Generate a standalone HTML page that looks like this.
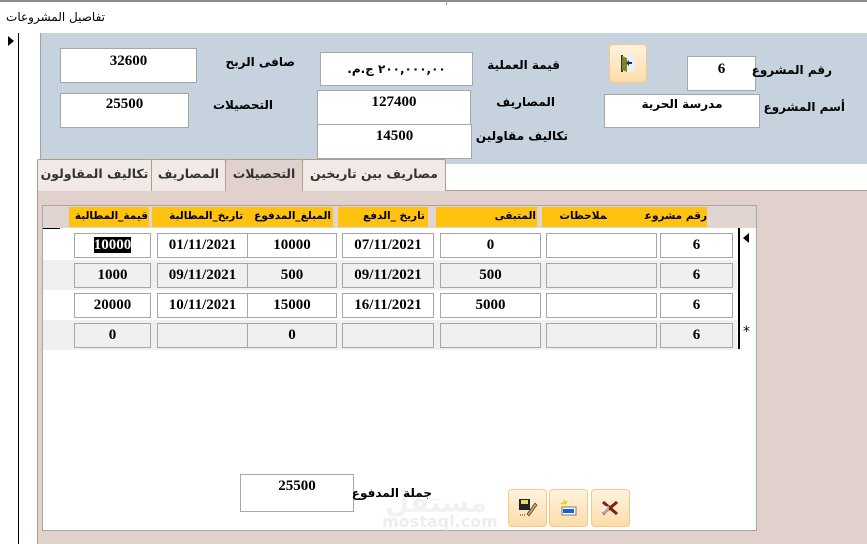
<!DOCTYPE html>
<html><head><meta charset="utf-8"><style>
*{margin:0;padding:0;box-sizing:border-box}
body{width:867px;height:544px;position:relative;background:#fff;overflow:hidden;font-family:"Liberation Sans","DejaVu Sans",sans-serif}
.a{position:absolute}
.box{position:absolute;background:#fff;border:1px solid #a6a6a6;font:bold 15px "Liberation Serif",serif;text-align:center;color:#000}
.lb{position:absolute;font:bold 12px "DejaVu Sans",sans-serif;direction:rtl;white-space:nowrap;color:#000;text-align:right}
.tab{position:absolute;top:159px;height:32px;border:1px solid #b59a8c;border-bottom:none;background:#f1e9e6;font:bold 12.5px "DejaVu Sans",sans-serif;direction:rtl;text-align:center;line-height:28px;color:#333;border-radius:2px 2px 0 0;white-space:nowrap;overflow:hidden}
.or{position:absolute;top:207px;height:20px;background:#ffc20e;font:bold 10.5px "DejaVu Sans",sans-serif;direction:rtl;line-height:18px;white-space:nowrap;overflow:hidden}
.c{position:absolute;height:25px;border:1px solid #a6a6a6;font:bold 15px "Liberation Serif",serif;text-align:center;line-height:23px}
.btn{position:absolute;top:489px;width:39px;height:38px;border:1px solid #f5c98a;border-radius:4px;background:linear-gradient(#fff3df,#fddcaa)}
</style></head><body>
<div class="a" style="left:0;top:0;width:867px;height:2px;background:#8a8a8a"></div>
<div class="a" style="left:446px;top:0;width:1px;height:5px;background:#999"></div>
<div class="lb" style="right:762px;top:10px;font-weight:normal;font-size:12px">تفاصيل المشروعات</div>
<div class="a" style="left:18px;top:33px;width:1px;height:511px;background:#000"></div>
<div class="a" style="left:8px;top:36px;width:0;height:0;border-left:6px solid #000;border-top:5px solid transparent;border-bottom:5px solid transparent"></div>
<div class="a" style="left:40px;top:33px;width:827px;height:131px;background:#c6d2de;border-left:1px solid #9aa"></div>
<div class="a" style="left:445px;top:164px;width:422px;height:26px;background:#fff"></div>

<div class="box" style="left:60px;top:48px;width:137px;height:35px;line-height:24px">32600</div>
<div class="box" style="left:60px;top:93px;width:129px;height:35px;line-height:20px">25500</div>
<div class="box" style="left:320px;top:52px;width:153px;height:34px;line-height:32px;font-size:12px;font-family:'DejaVu Sans',sans-serif;direction:rtl">٢٠٠,٠٠٠,٠٠ ج.م.</div>
<div class="box" style="left:317px;top:90px;width:154px;height:35px;line-height:22px">127400</div>
<div class="box" style="left:317px;top:124px;width:155px;height:35px;line-height:22px">14500</div>
<div class="lb" style="right:572px;top:55px">صافى الربح</div>
<div class="lb" style="right:594px;top:98px">التحصيلات</div>
<div class="lb" style="right:307px;top:58px">قيمة العملية</div>
<div class="lb" style="right:312px;top:95px">المصاريف</div>
<div class="lb" style="right:299px;top:129px">تكاليف مقاولين</div>
<div class="a" style="left:609px;top:44px;width:38px;height:39px;border:1px solid #f5c98a;border-radius:4px;background:linear-gradient(#fff3df,#fddcaa)">
<svg width="36" height="37"><rect x="11" y="10" width="14" height="17" fill="#eee"/><rect x="11" y="10" width="2" height="17" fill="#333"/><path d="M12 11 L17 13 L17 27 L12 25Z" fill="#7a8a20"/><path d="M17 18 L22 18" stroke="#1a2a90" stroke-width="2"/><path d="M19 15 L19 21 L16 18Z" fill="#1a2a90"/></svg></div>
<div class="box" style="left:687px;top:56px;width:69px;height:35px;line-height:24px">6</div>
<div class="lb" style="right:35px;top:63px">رقم المشروع</div>
<div class="lb" style="right:22px;top:100px">أسم المشروع</div>
<div class="box" style="left:604px;top:94px;width:156px;height:34px;line-height:18px;font-size:12px;font-family:'DejaVu Sans',sans-serif">مدرسة الحرية</div>

<div class="a" style="left:37px;top:190px;width:830px;height:354px;background:#e0d1cc;border-top:1px solid #b59a8c;border-left:1px solid #b59a8c"></div>
<div class="tab" style="left:37px;width:115px">تكاليف المقاولون</div>
<div class="tab" style="left:151px;width:75px">المصاريف</div>
<div class="tab" style="left:225px;width:78px;background:#e0d1cc">التحصيلات</div>
<div class="tab" style="left:302px;width:144px">مصاريف بين تاريخين</div>

<div class="a" style="left:42px;top:205px;width:715px;height:326px;background:#fff;border:1px solid #a6a6a6"></div>
<div class="a" style="left:43px;top:206px;width:713px;height:22px;background:#e0d5d1"></div>
<div class="a" style="left:43px;top:228px;width:17px;height:1px;background:#000"></div>
<div class="or" style="left:69px;width:80px;padding-right:1px">قيمة_المطالبة</div>
<div class="or" style="left:152px;width:181px;padding-right:2px">المبلغ_المدفوع &nbsp;&nbsp;تاريخ_المطالبة</div>
<div class="or" style="left:338px;width:90px;padding-right:3px">تاريخ _الدفع</div>
<div class="or" style="left:436px;width:101px;padding-right:1px">المتبقى</div>
<div class="or" style="left:542px;width:165px;padding-right:0">رقم مشروع<span style="margin-right:38px">ملاحظات</span></div>

<div class="a" style="left:43px;top:260px;width:694px;height:30px;background:#f0f0f0"></div>
<div class="a" style="left:43px;top:320px;width:694px;height:30px;background:#f0f0f0"></div>
<div class="a" style="left:738px;top:228px;width:2px;height:121px;background:#000"></div>
<div class="a" style="left:743px;top:233px;width:0;height:0;border-right:6px solid #000;border-top:5px solid transparent;border-bottom:5px solid transparent"></div>
<div class="a" style="left:743px;top:324px;font:14px 'DejaVu Sans',sans-serif">*</div>

<div id="rows"></div>
<script>
var xs=[[74,77],[157,91],[247,90],[342,92],[440,101],[546,111],[660,73]];
var tops=[233,263,293,323];
var bg=['#fff','#f0f0f0','#fff','#f0f0f0'];
var d=[["10000","01/11/2021","10000","07/11/2021","0","","6"],["1000","09/11/2021","500","09/11/2021","500","","6"],["20000","10/11/2021","15000","16/11/2021","5000","","6"],["0","","0","","","","6"]];
var h='';
for(var r=0;r<4;r++)for(var i=0;i<7;i++){var t=d[r][i];if(r==0&&i==0)t='<span style="background:#000;color:#fff">10000</span>';h+='<div class="c" style="left:'+xs[i][0]+'px;top:'+tops[r]+'px;width:'+xs[i][1]+'px;background:'+bg[r]+'">'+t+'</div>';}
document.getElementById('rows').innerHTML=h;
</script>

<div class="box" style="left:240px;top:474px;width:114px;height:38px;line-height:22px">25500</div>
<div class="a" style="left:385px;top:486px;font:bold 28px 'DejaVu Sans',sans-serif;color:#f2f2f2;direction:rtl">مستقل</div>
<div class="a" style="left:382px;top:512px;font:bold 16px 'DejaVu Sans',sans-serif;color:#eeeeee">mostaql.com</div>
<div class="lb" style="right:435px;top:486px">جملة المدفوع</div>
<div class="btn" style="left:508px"><svg width="37" height="36"><rect x="10" y="9" width="11" height="11" fill="#222"/><rect x="12" y="10" width="7" height="4" fill="#dfe060"/><path d="M18 24 L26 13 L28 15 L20 26Z" fill="#c8a050" stroke="#444" stroke-width=".7"/><path d="M11 25h6" stroke="#333" stroke-dasharray="1 1"/></svg></div>
<div class="btn" style="left:549px"><svg width="37" height="36"><rect x="12" y="17" width="14" height="8" fill="#fff" stroke="#777"/><rect x="13" y="19" width="11" height="4" fill="#1463d6"/><path d="M14 10l1 4M11 13l3 1M17 11l-2 3" stroke="#e6d200" stroke-width="1.5"/></svg></div>
<div class="btn" style="left:591px"><svg width="37" height="36"><path d="M11 12 L25 24 M25 12 L11 24" stroke="#7a1f1a" stroke-width="3"/><rect x="11" y="16" width="6" height="8" fill="#eee" opacity=".6"/></svg></div>
</body></html>
